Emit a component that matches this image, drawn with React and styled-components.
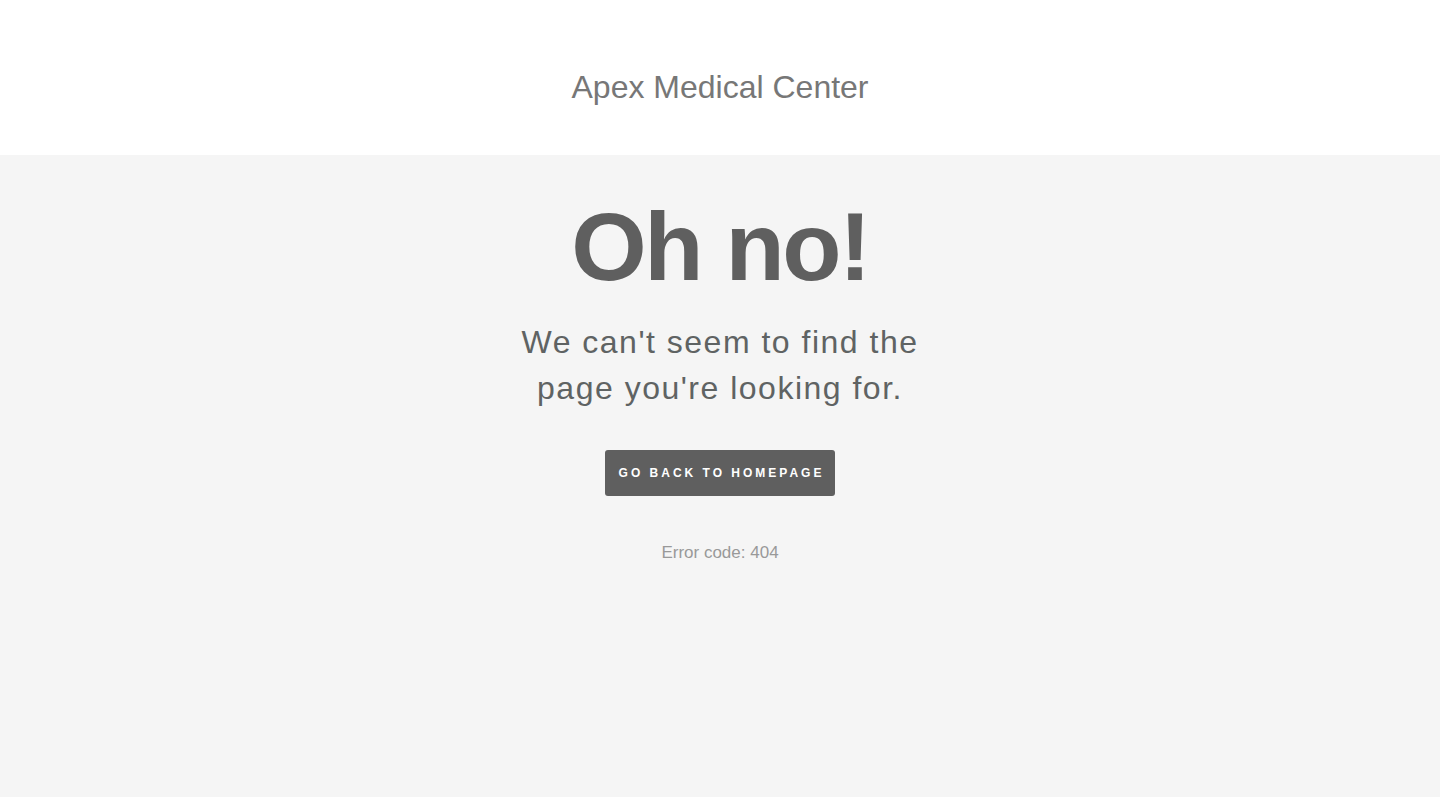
import styled, { createGlobalStyle } from "styled-components";

const GlobalStyle = createGlobalStyle`
  body {
    margin: 0;
    background: #ffffff;
    font-family: "Liberation Sans", Arial, Helvetica, sans-serif;
  }
`;

const Header = styled.header`
  box-sizing: border-box;
  height: 155px;
  padding-top: 69px;
  display: flex;
  justify-content: center;
  background: #ffffff;
`;

const SiteTitle = styled.a`
  font-size: 32px;
  line-height: 37px;
  color: #777777;
  text-decoration: none;
`;

const Main = styled.main`
  box-sizing: border-box;
  min-height: 642px;
  padding-top: 43px;
  background: #f5f5f5;
  display: flex;
  flex-direction: column;
  align-items: center;
  text-align: center;
`;

const Heading = styled.h1`
  margin: 0;
  font-size: 97px;
  line-height: 97px;
  font-weight: 700;
  letter-spacing: -2.5px;
  color: #5f5f5f;
`;

const Message = styled.p`
  margin: 24px 0 0;
  max-width: 420px;
  font-size: 32px;
  line-height: 46px;
  letter-spacing: 1.5px;
  color: #5f6363;
`;

const HomeButton = styled.a`
  box-sizing: border-box;
  margin-top: 39px;
  height: 46px;
  padding: 0 11px 0 14px;
  display: inline-flex;
  align-items: center;
  background: #5f5f5f;
  border-radius: 3px;
  color: #ffffff;
  font-size: 12px;
  font-weight: 700;
  letter-spacing: 3px;
  text-transform: uppercase;
  text-decoration: none;
`;

const ErrorCode = styled.p`
  margin: 47px 0 0;
  font-size: 17px;
  line-height: 20px;
  color: #999999;
`;

const Footer = styled.footer`
  height: 13px;
  background: #ffffff;
`;

function App() {
  return (
    <>
      <GlobalStyle />
      <Header>
        <SiteTitle href="#">Apex Medical Center</SiteTitle>
      </Header>
      <Main>
        <Heading>Oh no!</Heading>
        <Message>We can't seem to find the page you're looking for.</Message>
        <HomeButton href="#">Go back to homepage</HomeButton>
        <ErrorCode>Error code: 404</ErrorCode>
      </Main>
      <Footer />
    </>
  );
}

export default App;
